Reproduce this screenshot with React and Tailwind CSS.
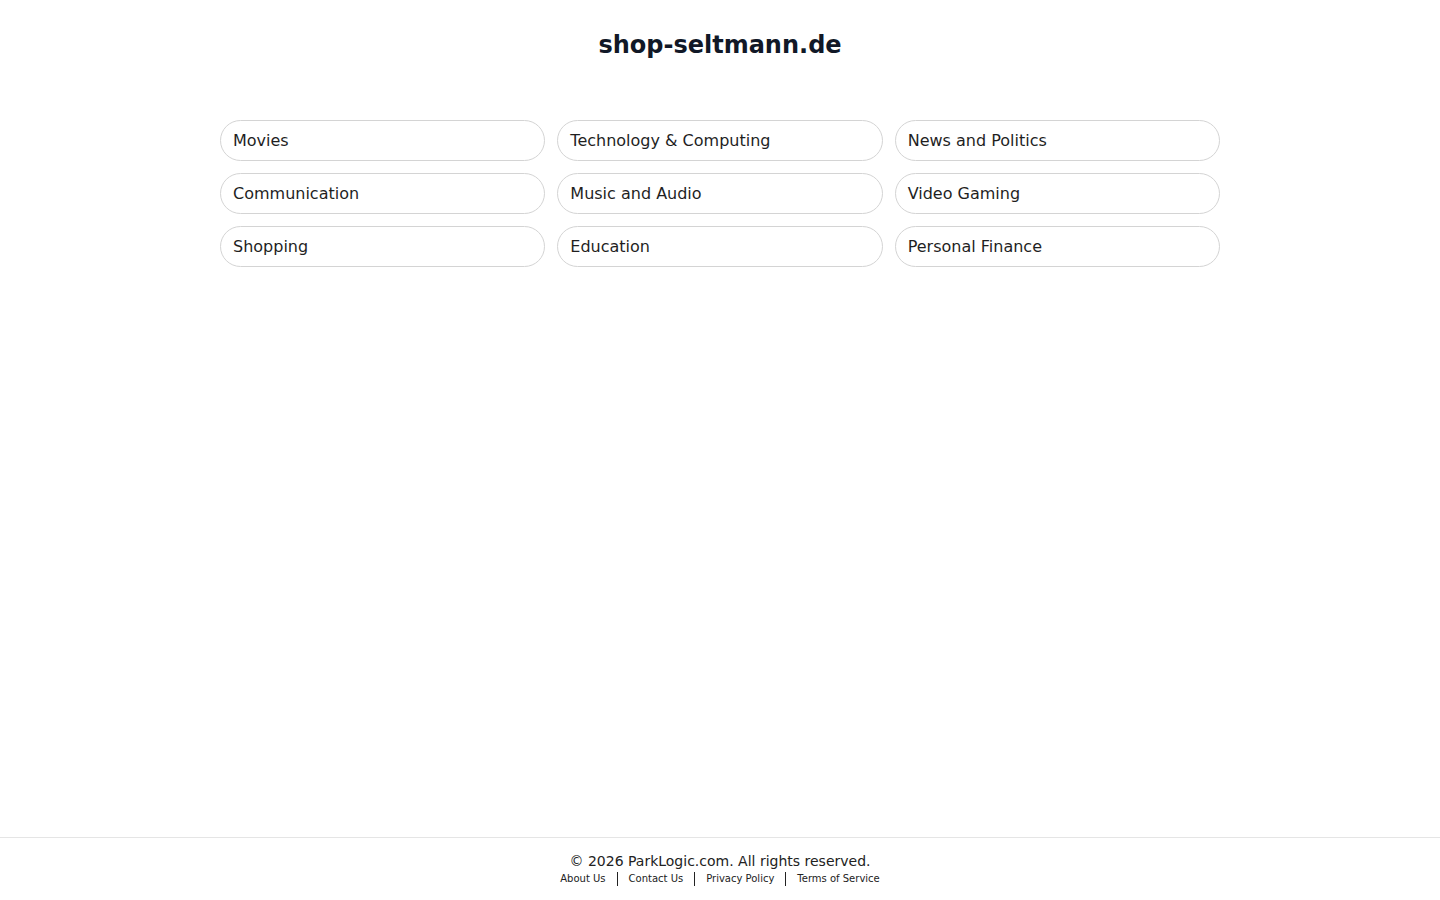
const CATEGORIES = [
  'Movies',
  'Technology & Computing',
  'News and Politics',
  'Communication',
  'Music and Audio',
  'Video Gaming',
  'Shopping',
  'Education',
  'Personal Finance',
];

const LINKS = ['About Us', 'Contact Us', 'Privacy Policy', 'Terms of Service'];

export default function App() {
  return (
    <div className="min-h-screen flex flex-col bg-white text-[#1a1a1a]" style={{ fontFamily: '"DejaVu Sans", sans-serif' }}>
      <main className="flex-1">
        <h1 className="pt-[31px] text-center text-[24px] leading-[28px] font-bold text-[#111827]">shop-seltmann.de</h1>

        <div className="mx-auto mt-[61px] w-[1000px] grid grid-cols-3 gap-3">
          {CATEGORIES.map((cat) => (
            <a
              key={cat}
              href="#"
              className="h-[41px] flex items-center px-[12px] rounded-full border border-[#d4d4d4] text-[16px] text-[#1f1f1f]"
            >
              {cat}
            </a>
          ))}
        </div>
      </main>

      <footer className="h-[63px] border-t border-[#e5e5e5] pt-[13px] text-center">
        <p className="text-[14px] leading-[20px] text-[#222]">© 2026 ParkLogic.com. All rights reserved.</p>
        <div className="flex items-center justify-center text-[10px] leading-[16px] text-[#222]">
          {LINKS.map((link, i) => (
            <span key={link} className="flex items-center">
              {i > 0 && <span className="mx-[11px] w-px h-[14px] bg-[#222]" />}
              <a href="#">{link}</a>
            </span>
          ))}
        </div>
      </footer>
    </div>
  );
}
